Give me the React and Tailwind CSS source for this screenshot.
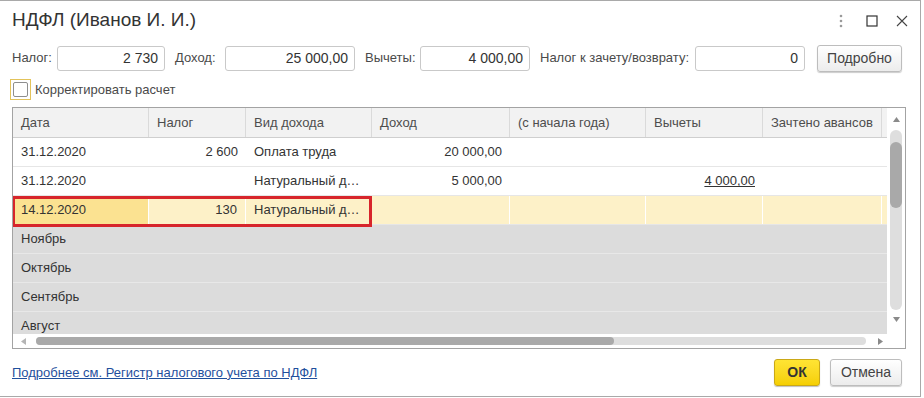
import React from "react";

const cols = [136, 97, 126, 138, 136, 117, 119, 5];

const headers = ["Дата", "Налог", "Вид дохода", "Доход", "(с начала года)", "Вычеты", "Зачтено авансов", ""];

const rows = [
  { cells: ["31.12.2020", "2 600", "Оплата труда", "20 000,00", "", "", "", ""] },
  { cells: ["31.12.2020", "", "Натуральный д…", "5 000,00", "", "4 000,00", "", ""], link: 5 },
];

const months = ["Ноябрь", "Октябрь", "Сентябрь", "Август"];

const alignRight = [false, true, false, true, true, true, true, false];

function Field({ label, value, width, labelWidth }) {
  return (
    <div className="flex items-center">
      <span className="text-[13px] text-[#4a4a4a] whitespace-nowrap" style={{ width: labelWidth }}>
        {label}
      </span>
      <div
        className="h-[25px] flex items-center justify-end pr-[6px] border border-[#c9c9c9] rounded-[3px] bg-white text-[14px] text-[#333]"
        style={{ width }}
      >
        {value}
      </div>
    </div>
  );
}

function Button({ children, className = "" }) {
  return (
    <div
      className={`h-[27px] flex items-center justify-center rounded-[3px] border border-[#bdbdbd] bg-gradient-to-b from-white to-[#ececec] shadow-[0_1px_1px_rgba(0,0,0,0.2)] text-[14px] text-[#444] ${className}`}
    >
      {children}
    </div>
  );
}

export default function App() {
  return (
    <div
      className="w-[921px] h-[397px] border-t border-r border-b border-[#a9a9a9] bg-white flex flex-col"
      style={{ fontFamily: '"Liberation Sans", Arial, sans-serif' }}
    >
      {/* Title bar */}
      <div className="h-[39px] flex items-center pl-[12px] pr-[12px]">
        <span className="text-[19px] text-[#333]">НДФЛ (Иванов И. И.)</span>
        <div className="ml-auto flex items-center">
          <svg width="6" height="14" viewBox="0 0 6 14">
            <circle cx="3" cy="2" r="1.3" fill="#9a9a9a" />
            <circle cx="3" cy="7" r="1.3" fill="#9a9a9a" />
            <circle cx="3" cy="12" r="1.3" fill="#9a9a9a" />
          </svg>
          <svg className="ml-[22px]" width="12" height="12" viewBox="0 0 12 12">
            <rect x="1" y="1" width="10" height="10" fill="none" stroke="#333" strokeWidth="1.2" />
          </svg>
          <svg className="ml-[18px]" width="12" height="12" viewBox="0 0 12 12">
            <path d="M1 1L11 11M11 1L1 11" stroke="#444" strokeWidth="1.1" />
          </svg>
        </div>
      </div>

      {/* Fields */}
      <div className="mt-[5px] h-[26px] flex items-center gap-[10px] pl-[12px]">
        <Field label="Налог:" value="2 730" width={108} labelWidth={45} />
        <Field label="Доход:" value="25 000,00" width={130} labelWidth={50} />
        <Field label="Вычеты:" value="4 000,00" width={110} labelWidth={55} />
        <Field label="Налог к зачету/возврату:" value="0" width={110} labelWidth={155} />
        <Button className="ml-[2px] w-[85px]">Подробно</Button>
      </div>

      {/* Checkbox */}
      <div className="mt-[8px] h-[21px] flex items-center pl-[10px]">
        <div className="w-[21px] h-[21px] border border-[#e3c35a] flex items-center justify-center">
          <div className="w-[15px] h-[15px] border border-[#8e8e8e] rounded-[2px] bg-white" />
        </div>
        <span className="ml-[4px] text-[13px] text-[#4a4a4a]">Корректировать расчет</span>
      </div>

      {/* Table */}
      <div className="mt-[7px] ml-[12px] w-[894px] h-[242px] border border-[#a3a3a3] flex flex-col">
        <div className="flex h-[226px]">
          <div className="relative w-[874px] shrink-0 flex flex-col overflow-hidden">
            {/* header */}
            <div className="flex h-[30px] shrink-0 bg-[#f2f2f2] border-b border-[#cfcfcf]">
              {headers.map((h, i) => (
                <div
                  key={i}
                  className={`h-full shrink-0 flex items-center pl-[8px] text-[13px] text-[#4d4d4d] ${i < 7 ? "border-r border-[#dadada]" : ""}`}
                  style={{ width: cols[i] }}
                >
                  {h}
                </div>
              ))}
            </div>

            {rows.map((r, ri) => (
              <div key={ri} className="flex h-[29px] shrink-0 border-b border-[#e6e6e6] bg-white">
                {r.cells.map((c, i) => (
                  <div
                    key={i}
                    className={`h-full shrink-0 flex items-center px-[8px] text-[13px] text-[#333] whitespace-nowrap ${alignRight[i] ? "justify-end" : ""}`}
                    style={{ width: cols[i] }}
                  >
                    {r.link === i ? <span className="underline">{c}</span> : c}
                  </div>
                ))}
              </div>
            ))}

            {/* selected row */}
            <div className="flex h-[29px] shrink-0 border-b border-[#e6e6e6] bg-[#fdf1c8]">
              {cols.map((w, i) => (
                <div
                  key={i}
                  className={`h-full shrink-0 flex items-center px-[8px] text-[13px] text-[#333] whitespace-nowrap ${alignRight[i] ? "justify-end" : ""} ${i < 7 ? "border-r border-white" : ""} ${i === 0 ? "bg-[#fbe291]" : ""}`}
                  style={{ width: w }}
                >
                  {i === 0 ? "14.12.2020" : i === 1 ? "130" : i === 2 ? "Натуральный д…" : ""}
                </div>
              ))}
            </div>

            {months.map((m) => (
              <div
                key={m}
                className="flex items-center h-[29px] shrink-0 border-b border-[#e8e8e8] bg-[#dcdcdc] pl-[8px] text-[13px] text-[#333]"
              >
                {m}
              </div>
            ))}

            {/* red highlight frame */}
            <div className="absolute left-[-1px] top-[88px] w-[360px] h-[31px] border-[3px] border-[#d7252b]" />
          </div>

          {/* vertical scrollbar */}
          <div className="w-[18px] flex flex-col items-center bg-white">
            <svg className="mt-[9px]" width="7" height="5" viewBox="0 0 7 5">
              <path d="M0 5L3.5 0L7 5Z" fill="#8a8a8a" />
            </svg>
            <div className="mt-[8px] w-[12px] h-[180px] rounded-[6px] bg-[#dedede] flex flex-col">
              <div className="mt-[12px] h-[66px] w-[12px] rounded-[6px] bg-[#a9a9a9]" />
            </div>
            <svg className="mt-[7px]" width="7" height="5" viewBox="0 0 7 5">
              <path d="M0 0L3.5 5L7 0Z" fill="#8a8a8a" />
            </svg>
          </div>
        </div>

        {/* horizontal scrollbar */}
        <div className="h-[14px] flex items-center pl-[8px]">
          <svg width="5" height="7" viewBox="0 0 5 7">
            <path d="M5 0L0 3.5L5 7Z" fill="#b5b5b5" />
          </svg>
          <div className="ml-[10px] w-[830px] h-[8px] rounded-[4px] bg-[#dedede] flex">
            <div className="w-[578px] h-[8px] rounded-[4px] bg-[#a9a9a9]" />
          </div>
          <svg className="ml-[12px]" width="5" height="7" viewBox="0 0 5 7">
            <path d="M0 0L5 3.5L0 7Z" fill="#8a8a8a" />
          </svg>
        </div>
      </div>

      {/* Footer */}
      <div className="mt-[10px] h-[27px] flex items-center pl-[12px] pr-[18px]">
        <span className="text-[13px] text-[#1f4f9d] underline">Подробнее см. Регистр налогового учета по НДФЛ</span>
        <div className="ml-auto flex items-center gap-[10px]">
          <div className="w-[46px] h-[27px] flex items-center justify-center rounded-[3px] border border-[#caa817] bg-gradient-to-b from-[#ffe433] to-[#f5cf00] shadow-[0_1px_1px_rgba(0,0,0,0.25)] text-[14px] font-bold text-[#333]">
            ОК
          </div>
          <Button className="w-[72px]">Отмена</Button>
        </div>
      </div>
    </div>
  );
}
